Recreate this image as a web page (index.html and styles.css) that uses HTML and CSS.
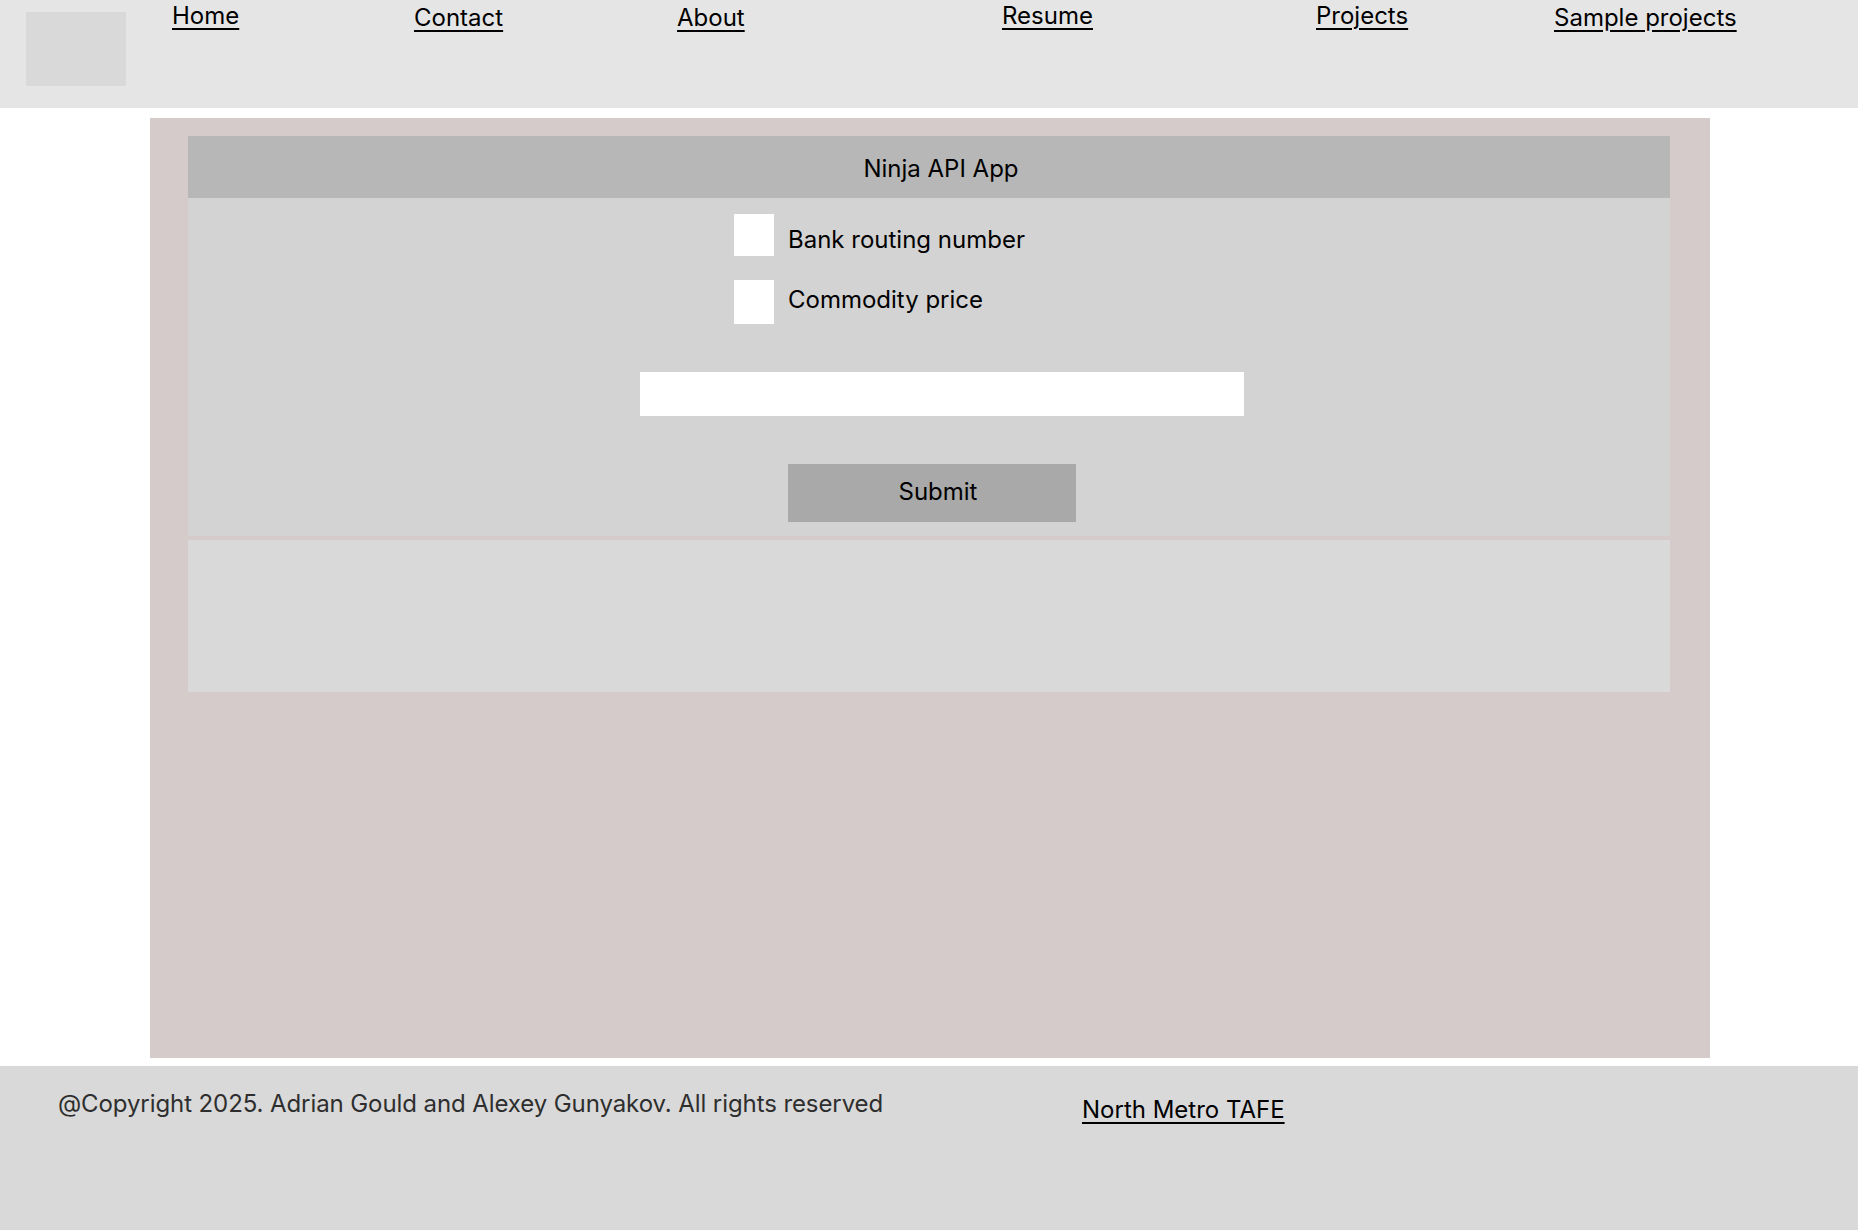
FILE: index.html
```html
<!DOCTYPE html>
<html lang="en">
<head>
<meta charset="utf-8">
<title>Ninja API App</title>
<link rel="stylesheet" href="styles.css">
</head>
<body>
<header class="site-header">
  <div class="logo"></div>
  <nav class="nav">
    <a class="nav-link" href="#">Home</a>
    <a class="nav-link nav-link--low" href="#">Contact</a>
    <a class="nav-link nav-link--low" href="#">About</a>
    <a class="nav-link" href="#">Resume</a>
    <a class="nav-link" href="#">Projects</a>
    <a class="nav-link nav-link--low" href="#">Sample projects</a>
  </nav>
</header>
<main class="main">
  <section class="app">
    <h1 class="app-title">Ninja API App</h1>
    <form class="app-form">
      <div class="options">
        <label class="option"><input type="checkbox" class="option-box option-box--first"><span class="option-text option-text--down">Bank routing number</span></label>
        <label class="option"><input type="checkbox" class="option-box"><span class="option-text option-text--up">Commodity price</span></label>
      </div>
      <input type="text" class="query">
      <button type="button" class="submit">Submit</button>
    </form>
    <div class="results"></div>
  </section>
</main>
<footer class="site-footer">
  <p class="copyright">@Copyright 2025. Adrian Gould and Alexey Gunyakov. All rights reserved</p>
  <a class="footer-link" href="#">North Metro TAFE</a>
</footer>
</body>
</html>
```
FILE: styles.css
```css
* { box-sizing: border-box; }

html, body {
  margin: 0;
  padding: 0;
  background: #ffffff;
  font-family: Inter, "Noto Sans", sans-serif;
  font-size: 24px;
  line-height: normal;
  color: #000;
}

.site-header {
  display: flex;
  align-items: flex-start;
  height: 108px;
  padding-left: 26px;
  background: #e5e5e5;
}

.logo {
  width: 100px;
  height: 74px;
  margin-top: 12px;
  background: #d9d9d9;
}

.nav {
  display: grid;
  grid-template-columns: 242px 263px 325px 314px 238px auto;
  margin-left: 46px;
  padding-top: 1px;
}

.nav-link {
  justify-self: start;
  color: #000;
  text-decoration: underline;
  text-underline-offset: 4px;
}

.nav-link--low {
  padding-top: 2px;
}

.main {
  width: 1560px;
  height: 940px;
  margin: 10px 0 8px 150px;
  padding: 18px 40px 0 38px;
  background: #d5cbca;
}

.app-title {
  margin: 0;
  height: 62px;
  line-height: 62px;
  padding: 2px 0 0 24px;
  text-align: center;
  font-size: 24px;
  font-weight: 400;
  background: #b7b7b7;
}

.app-form {
  display: flex;
  flex-direction: column;
  align-items: center;
  padding: 16px 0 14px;
  background: #d3d3d3;
}

.options {
  display: flex;
  flex-direction: column;
  gap: 24px;
  width: 390px;
}

.option {
  display: flex;
  align-items: center;
  gap: 14px;
}

.option-box {
  appearance: none;
  -webkit-appearance: none;
  margin: 0;
  width: 40px;
  height: 44px;
  border: none;
  background: #ffffff;
}

.option-box--first {
  height: 42px;
}

.option-text {
  font-size: 24px;
}

.option-text--down {
  margin-top: 9px;
}

.option-text--up {
  margin-bottom: 5px;
}

.query {
  width: 604px;
  height: 44px;
  margin: 48px 0 0 26px;
  border: none;
  background: #ffffff;
  font: inherit;
}

.submit {
  width: 288px;
  height: 58px;
  margin: 48px 0 0 6px;
  border: none;
  background: #a9a9a9;
  font-family: Inter, "Noto Sans", sans-serif;
  font-size: 24px;
  color: #000;
  padding: 0 0 4px 12px;
}

.results {
  height: 152px;
  margin-top: 4px;
  background: #d9d9d9;
}

.site-footer {
  display: grid;
  grid-template-columns: 1024px auto;
  align-items: start;
  height: 164px;
  padding: 23px 0 0 58px;
  background: #d9d9d9;
}

.copyright {
  margin: 0;
  color: #2e2e2e;
  letter-spacing: -0.09px;
}

.footer-link {
  justify-self: start;
  margin-top: 6px;
  color: #000;
  text-decoration: underline;
  text-underline-offset: 4px;
}
```
